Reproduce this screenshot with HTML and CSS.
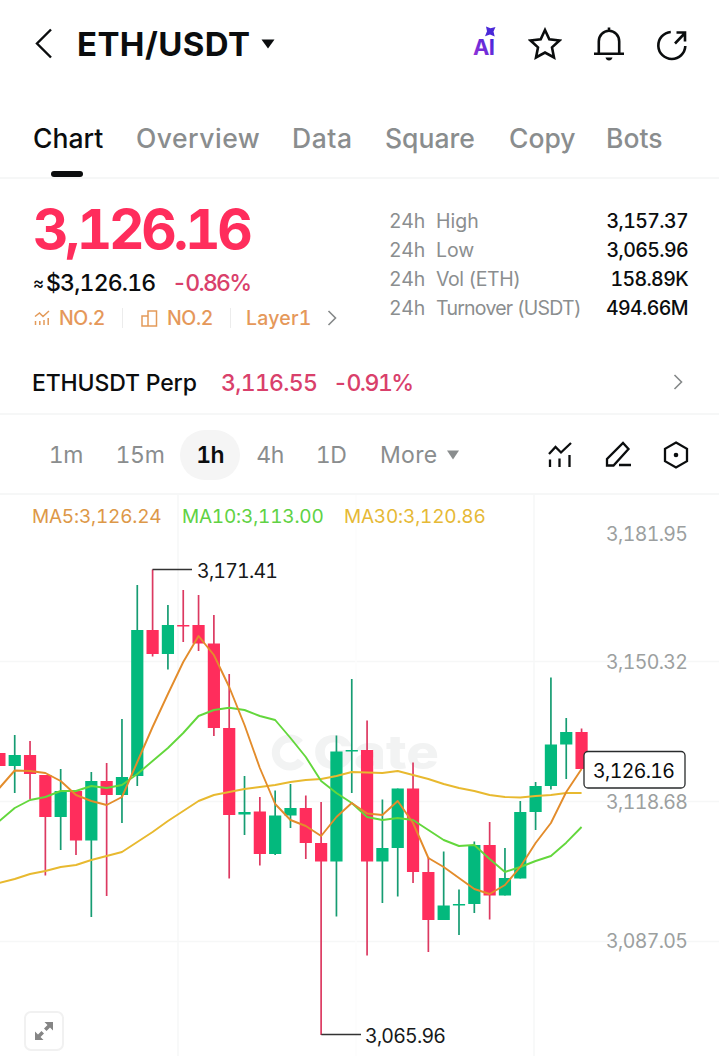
FILE: index.html
```html
<!DOCTYPE html>
<html lang="en">
<head>
<meta charset="utf-8">
<title>ETH/USDT</title>
<link rel="stylesheet" href="styles.css">
</head>
<body>
<main class="app">
  <header class="topbar">
    <svg class="back" width="20" height="32" viewBox="0 0 20 32"><path d="M17 1.500 3 15.500l14 14"/></svg>
    <h1 class="pair">ETH/USDT</h1>
    <svg class="pair-caret" width="14" height="10" viewBox="0 0 14 10"><path d="M.5.5h13L7 9.500z"/></svg>
    <div class="actions">
      <svg width="26" height="34" viewBox="0 0 26 34">
        <defs><linearGradient id="ai" x1="0" y1="1" x2="1" y2="0"><stop offset="0" stop-color="#9b35d6"/><stop offset="1" stop-color="#3c22dc"/></linearGradient></defs>
        <text class="ai-text" x="1" y="27.500" textLength="22" fill="url(#ai)">AI</text>
        <path fill="#4a28d8" d="M14-.5l4.500 1.800L23.500 0 21.500 4.500l1.200 5-4.700-2-5 1.800 2-5z"/>
      </svg>
      <svg class="line" width="34" height="34" viewBox="0 0 34 34"><path d="M17 3l4.300 9.200 10.200 1.300-7.500 6.900 2 10.100-9-5-9 5 2-10.100-7.500-6.900 10.200-1.300z"/></svg>
      <svg class="line" width="32" height="36" viewBox="0 0 32 36"><path d="M5.800 27.500V15.500a10.200 10.700 0 0 1 20.400 0v12M1 27.700h30M16 5V1.500"/><path class="solid" d="M12.500 31.500h7q-.8 3-3.500 3t-3.500-3z"/></svg>
      <svg class="line share" width="32" height="32" viewBox="0 0 32 32"><path d="M14.800 3A13.500 13.500 0 1 0 29.300 17M19 14.500 29 4M20.500 3.500h8.500v9"/></svg>
    </div>
  </header>

  <nav class="tabs">
    <a class="tab active">Chart</a><a class="tab overview">Overview</a><a class="tab data">Data</a><a class="tab">Square</a><a class="tab">Copy</a><a class="tab">Bots</a>
  </nav>

  <section class="summary">
    <div class="quote">
      <div class="price">3,126.16</div>
      <div class="fiat"><span class="approx">≈</span><span class="usd">$3,126.16</span><span class="change">-0.86%</span></div>
      <div class="badges">
        <svg class="badge-icon" width="16" height="17" viewBox="0 0 16 17"><path d="M1 6.500 5.500 3 9 6.500 15 1M1.500 11v4M5.800 11v4M10 10v5M14.200 8v7"/></svg>
        <span class="badge">NO.2</span><i class="sep"></i>
        <svg class="badge-icon" width="17" height="17" viewBox="0 0 17 17"><path d="M1 6h6v10H1zM7 1h8.500v15H7z"/></svg>
        <span class="badge">NO.2</span><i class="sep"></i>
        <span class="badge layer">Layer1</span>
        <svg class="chev" width="10" height="16" viewBox="0 0 10 16"><path d="M1.500 1 8.500 8l-7 7"/></svg>
      </div>
    </div>
    <dl class="stats">
      <dt>24h</dt><dt>High</dt><dd>3,157.37</dd>
      <dt>24h</dt><dt>Low</dt><dd>3,065.96</dd>
      <dt>24h</dt><dt class="s-vol">Vol (ETH)</dt><dd>158.89K</dd>
      <dt>24h</dt><dt class="s-turn">Turnover (USDT)</dt><dd>494.66M</dd>
    </dl>
  </section>

  <section class="perp">
    <span class="perp-name">ETHUSDT Perp</span>
    <span class="perp-price">3,116.55</span>
    <span class="perp-change">-0.91%</span>
    <svg class="chev" width="10" height="16" viewBox="0 0 10 16"><path d="M1.500 1 8.500 8l-7 7"/></svg>
  </section>

  <section class="frames">
    <span class="frame">1m</span><span class="frame">15m</span><span class="frame on">1h</span><span class="frame">4h</span><span class="frame">1D</span>
    <span class="more">More</span>
    <svg class="more-caret" width="12" height="10" viewBox="0 0 12 10"><path d="M0 .5h12L6 9.500z"/></svg>
    <div class="tools">
      <svg class="tool" width="26" height="28" viewBox="0 0 26 28"><path d="M2 13 8.500 6l5.500 5.500L24 2M3 18.500V26M12.500 17.500V26M22.500 14V26"/></svg>
      <svg class="tool" width="28" height="28" viewBox="0 0 28 28"><path d="M3 24.500V18L19 2l5.500 6L9.500 24.500zM15 24h12"/></svg>
      <svg class="tool" width="26" height="28" viewBox="0 0 26 28"><path d="M13 1.500 24 7.800v12.400L13 26.500 2 20.200V7.800z"/><circle cx="13" cy="14" r="2.300"/></svg>
    </div>
  </section>

  <section class="chart">
    <svg class="plot" id="plot" width="719" height="561" viewBox="0 495 719 561">
      <g class="grid"><path d="M0 661.500H719M0 801.500H719M0 941.500H719"/><path d="M178 495V1056M534 495V1056"/><path class="faint" d="M356 495V1056"/></g>
      <g class="watermark"><path d="M300 743a14 14 0 1 0 1 18"/><text x="313" y="769" textLength="126" lengthAdjust="spacingAndGlyphs">Gate</text></g>
      <g id="candles"></g>
      <g class="callout">
        <path d="M152.500 569.500H192M321.300 1034.500H361"/>
        <text x="197" y="577.500" textLength="81">3,171.41</text>
        <text x="365" y="1042.500" textLength="81">3,065.96</text>
      </g>
      <g id="averages"></g>
      <g class="axis">
        <text x="606" y="541" textLength="82">3,181.95</text>
        <text x="606" y="668.500" textLength="82">3,150.32</text>
        <text x="606" y="808.500" textLength="82">3,118.68</text>
        <text x="606" y="947.500" textLength="82">3,087.05</text>
      </g>
      <g class="last"><rect x="584" y="751.500" width="101" height="36.500" rx="4"/><text x="593" y="777.500" textLength="82">3,126.16</text></g>
    </svg>
    <div class="legend"><span class="ma5">MA5:3,126.24</span><span class="ma10">MA10:3,113.00</span><span class="ma30">MA30:3,120.86</span></div>
    <button class="expand" aria-label="Expand"><svg width="20" height="20" viewBox="0 0 20 20"><path d="M10.500 1H19v8.500l-3-3-3.500 3.500-2.500-2.500L13.500 4zM1 10.500l3 3L7.500 10l2.500 2.500L6.500 16l3 3H1z"/></svg></button>
  </section>
</main>
<script src="chart.js"></script>
</body>
</html>
```

FILE: styles.css
```css
* { box-sizing: border-box; }
body { margin: 0; background: #fff; color: #0b0d0e; font-family: Inter, "Liberation Sans", sans-serif; font-variant-numeric: tabular-nums; }
.app { width: 719px; height: 1056px; overflow: hidden; }
svg { display: block; flex: none; fill: none; }

.topbar { height: 88px; display: flex; align-items: center; padding: 0 31px 0 34px; }
.back path { stroke: #0b0d0e; stroke-width: 2.400; }
.pair { margin: 0 0 0 23px; width: 173px; font-size: 33px; font-weight: 700; line-height: 40px; letter-spacing: .4px; white-space: nowrap; }
.pair-caret { margin-left: 11px; fill: #0b0d0e; }
.actions { margin-left: auto; display: flex; align-items: center; gap: 31px; }
.actions > svg:first-child { margin-right: -1px; overflow: visible; }
.ai-text { font: 700 22px Inter, sans-serif; }
.line { stroke: #0b0d0e; stroke-width: 2.600; }
.share { margin-top: 2px; }
.line .solid { fill: #0b0d0e; stroke: none; }

.tabs { height: 91px; border-bottom: 2px solid #f6f7f7; padding: 0 0 0 33px; display: grid; grid-template-columns: 103px 156px 93px 124px 97px 1fr; }
.tab { position: relative; height: 89px; font-size: 26.500px; font-weight: 500; line-height: 100px; color: #8a8d8e; white-space: nowrap; }
.tab.overview { letter-spacing: .5px; }
.tab.data { letter-spacing: .6px; }
.tab.active { color: #0b0d0e; }
.tab.active::after { content: ""; position: absolute; left: 18px; bottom: 0; width: 32px; height: 6px; border-radius: 3px; background: #0b0d0e; }

.summary { height: 171px; display: flex; justify-content: space-between; padding: 21px 31px 0 33px; }
.price { color: #ff2d5c; font-size: 55px; font-weight: 700; line-height: 58px; letter-spacing: -3.300px; }
.fiat { display: flex; align-items: center; height: 30px; margin-top: 10px; font-size: 23px; line-height: 30px; white-space: nowrap; }
.approx { width: 13px; font-size: 17px; font-weight: 500; }
.usd { width: 126px; font-weight: 500; letter-spacing: -.8px; }
.change { color: #d9406b; font-weight: 500; letter-spacing: -1.700px; }
.badges { display: flex; align-items: center; height: 26px; margin-top: 7px; margin-left: 1px; }
.badge-icon { stroke: #e39a59; stroke-width: 1.500; }
.badge { width: 46px; margin-left: 9px; color: #e5985a; font-size: 19.500px; font-weight: 500; letter-spacing: -.4px; white-space: nowrap; }
.badge.layer { width: 66px; margin-left: 14px; letter-spacing: .2px; }
.sep { width: 1px; height: 20px; margin: 0 18px 0 17px; background: #ececec; }
.sep:nth-of-type(2) { margin-right: 1px; }
.chev { stroke: #858889; stroke-width: 1.600; }
.badges .chev { margin-left: 15px; }

.stats { margin: 6.500px 0 0; width: 299px; display: grid; grid-template-columns: 47px 1fr auto; grid-auto-rows: 29px; font-size: 19.500px; line-height: 29px; white-space: nowrap; }
.stats dt { color: #8b8e8f; }
.stats dt:nth-of-type(odd) { letter-spacing: -.3px; }
.stats .s-vol { letter-spacing: -.4px; }
.stats dt.s-turn { letter-spacing: -.75px; }
.stats dd { margin: 0; color: #0b0d0e; font-weight: 500; letter-spacing: -.6px; text-align: right; }

.perp { height: 65px; border-bottom: 2px solid #f6f7f7; padding: 2px 36px 0 32px; display: flex; align-items: center; font-size: 23px; font-weight: 500; white-space: nowrap; }
.perp-name { width: 189px; letter-spacing: -.15px; }
.perp-price { width: 112px; color: #d9406b; letter-spacing: -.7px; }
.perp-change { color: #d9406b; letter-spacing: -1.500px; }
.perp .chev { margin-left: auto; margin-top: -2px; }

.frames { height: 80px; border-bottom: 2px solid #f6f7f7; padding: 2px 30px 0 32px; display: flex; align-items: center; font-size: 23px; color: #8a8d8e; white-space: nowrap; }
.frame { width: 62px; height: 50px; line-height: 50px; text-align: center; border-radius: 25px; letter-spacing: -.4px; }
.frame:first-child { width: 68px; }
.frame:nth-child(2) { width: 80px; }
.frame.on { width: 60px; background: #f5f5f5; color: #0b0d0e; font-weight: 600; letter-spacing: -.8px; }
.frame:nth-child(4) { width: 60px; }
.more { width: 58px; margin-left: 18px; letter-spacing: .3px; }
.more-caret { margin-left: 9px; fill: #8a8d8e; }
.tools { margin-left: auto; display: flex; align-items: center; gap: 31px; }
.tool { stroke: #0b0d0e; stroke-width: 2.300; }
.tool circle { fill: #0b0d0e; stroke: none; }

.chart { display: grid; height: 561px; }
.chart > * { grid-area: 1 / 1; }
.plot text { font-family: Inter, "Liberation Sans", sans-serif; font-size: 19.500px; }
.grid { stroke: #f6f7f7; stroke-width: 1.500; }
.grid .faint { stroke: #fcfcfc; }
.watermark path { stroke: #f2f3f3; stroke-width: 8; }
.plot .watermark text { fill: #f2f3f3; font-size: 47px; font-weight: 800; }
.up { fill: #03b97d; }
.down { fill: #ff2d5c; }
.wick { stroke-width: 1.700; }
.wick.up { stroke: #169c72; }
.wick.down { stroke: #dc3961; }
.avg { stroke-width: 1.900; stroke-linejoin: round; }
.avg.ma5 { stroke: #e38c2b; }
.avg.ma10 { stroke: #63d73c; }
.avg.ma30 { stroke: #e8b92f; }
.callout path { stroke: #333; stroke-width: 1.500; }
.callout text { fill: #17191a; }
.axis text { fill: #9c9fa0; }
.last rect { fill: #fff; stroke: #292b2c; stroke-width: 1.300; }
.last text { fill: #0b0d0e; }
.legend { display: flex; align-self: start; gap: 20px; padding: 10px 0 0 32px; font-size: 19px; line-height: 24px; letter-spacing: -.2px; white-space: nowrap; }
.legend span { width: 142px; }
.legend .ma5 { width: 130px; color: #dd9848; }
.legend .ma10 { color: #60d244; }
.legend .ma30 { color: #e6b936; }
.expand { align-self: end; justify-self: start; width: 40px; height: 40px; margin: 0 0 5px 24px; padding: 0; display: grid; place-items: center; border: 2px solid #f1f1f1; border-radius: 7px; background: #fff; }
.expand svg { fill: #858585; }
```

FILE: chart.js
```js
// Candle rows: direction, body top, body bottom, wick top, wick bottom.
const candles = [
  ["down",753,766,753,766],["up",755,766,735,793],["down",755,774,741,799.5],["down",775,817,775,875.5],
  ["up",791,817,769,850],["down",791,840.5,791,855],["up",781,840.5,772,917],["down",781,795,763,896],
  ["up",777,795,719,823],["up",630,776,585,786],["down",630,654,569.5,656.5],["up",625,654,605,669.5],
  ["down",625,626.5,590,642],["down",625,643.5,595,651],["down",643.5,728,615,736],["down",728,815,674,878.5],
  ["up",812,814.5,776,835],["down",811.5,854,797,865.5],["up",815.5,854,790.5,855],["up",808,815.5,784,828],
  ["down",808,843,795.5,859],["down",843,861.5,802,1035],["up",751.5,861.5,735.5,916.5],["up",750,751.5,679,793],
  ["down",750,861.5,720.5,955.5],["up",848,861.5,799.5,903],["up",788.5,848,788.5,896.5],["down",788.5,872,762.5,883],
  ["down",872,920,857,952],["up",905.5,920,851.5,920],["up",904,905.5,889.5,935],["up",845,904,841.5,913],
  ["down",845,895.5,822,919.5],["up",878,895.5,848,895.5],["up",812,878.5,801,878.5],["up",786,812,782,830],
  ["up",744.5,786,677.5,789.5],["up",732,744.5,718,779],["down",732,769,728.5,769]
];
const averages = {
  ma30: [883,879,874,871,867,865,860,856,852,842,832,821,811,801,795,792,789,787,785,782,780,779,776,772,772.5,773,771,775,779,784,788,791,795,797,797.5,796,795,793,793],
  ma10: [821,808,800,797,791,791,786,788,785,774,761,748,733,716,710,707.7,710,716,720,738,757,781,793,803,817,820,818,820,830,840,846,845,859,872,867,861,856,842.7,827],
  ma5: [788,770.5,771,773,781,795,801,805,797,762,727,694,662,636,655,687,725,768,804,820,826,836,817,803,813.5,815,801,823,858,867,878,889,894,885,867,843,823,792,769]
};
const x = i => -0.6 + 15.32 * i;
const candleMarkup = candles.map(([dir, top, bottom, high, low], i) =>
  `<path class="wick ${dir}" d="M${x(i)} ${high}V${low}"/><rect class="${dir}" x="${x(i) - 6.1}" y="${top}" width="12.2" height="${bottom - top}"/>`
).join("");
document.getElementById("candles").innerHTML = candleMarkup;
document.getElementById("averages").innerHTML = Object.entries(averages).map(([name, ys]) =>
  `<polyline class="avg ${name}" points="${ys.map((y, i) => `${x(i)},${y}`).join(" ")}"/>`
).join("");
```
